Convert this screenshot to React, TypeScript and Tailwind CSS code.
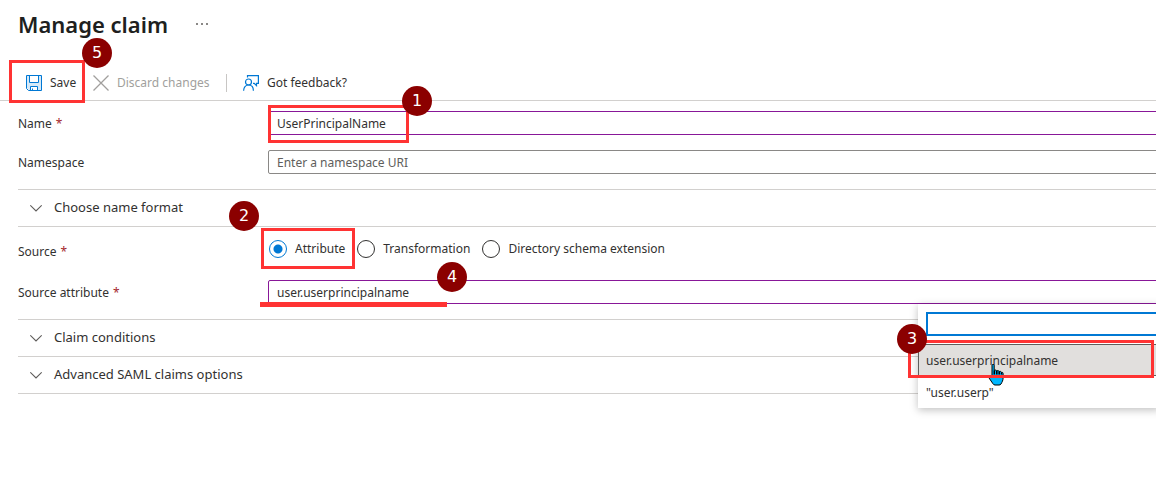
import type { ReactNode } from 'react';

function SaveIcon() {
  return (
    <svg width="16" height="16" viewBox="0 0 16 16" fill="none" stroke="#0078d4" aria-hidden="true">
      <path d="M1 1h14v14H3l-2-2z" fill="#d5e9f8" stroke="none" />
      <path d="M3.500.5h9v7h-9z" fill="#fff" />
      <path d="M4.500 15.500v-4h7v4" fill="#fff" />
      <path d="M.5.5h15v15H2.500l-2-2zM6.500 15.500v-2" />
    </svg>
  );
}

function CloseIcon() {
  return (
    <svg width="16" height="16" viewBox="0 0 16 16" stroke="#a19f9d" strokeWidth="1.3" aria-hidden="true">
      <path d="M.5.5l15 15M15.500.5l-15 15" />
    </svg>
  );
}

function FeedbackIcon() {
  return (
    <svg width="16" height="16" viewBox="0 0 16 16" fill="none" stroke="#0078d4" strokeWidth="1.200" aria-hidden="true">
      <path d="M4.500 2.500V.6h10.900v7.800h-1.900v2.200l-2.300-2.200H10" />
      <circle cx="5.500" cy="7" r="3" />
      <path d="M.6 15.800c0-3.500 2-5.800 4.900-5.800s4.900 2.300 4.900 5.800" />
    </svg>
  );
}

function HandCursor() {
  return (
    <svg width="16" height="22" viewBox="0 0 16 22" aria-hidden="true">
      <path
        d="M4 1.200c0-1 2.200-1 2.200 0v5.300c.6-.8 2.200-.6 2.500.4.700-.7 2.200-.4 2.400.7.800-.6 2.200-.2 2.300.8.900-.4 1.700.2 1.700 1.100V14c0 2.400-1 4-2.100 6-.5.8-1.200 1-2 1H7c-.9 0-1.500-.4-2-1.200L.7 13.500c-.7-1.200.7-2.200 1.700-1.300L4 13.600z"
        fill="#00b7ff"
        stroke="#000"
      />
      <path d="M6.300 6.500v4M8.800 7v3.500M11.200 7.800v2.700M13.500 8.500v2" stroke="#000" strokeWidth="1.500" />
    </svg>
  );
}

function Required() {
  return <span className="ml-1 text-[#a4262c]">*</span>;
}

function Label({ htmlFor, required, children }: { htmlFor?: string; required?: boolean; children: ReactNode }) {
  return (
    <label htmlFor={htmlFor} className="h-6 w-[250px] shrink-0 leading-[26px]">
      {children}
      {required && <Required />}
    </label>
  );
}

function Section({ title }: { title: string }) {
  return (
    <button type="button" className="flex h-[37px] w-full items-center gap-3 border-b border-[#d2d0ce] pl-3 text-left text-[13px]">
      <svg width="12" height="12" viewBox="0 0 12 12" fill="none" stroke="#605e5c" strokeWidth="1.200" aria-hidden="true">
        <path d="M.3 3.300L6 9l5.700-5.700" />
      </svg>
      {title}
    </button>
  );
}

function Radio({ label, checked }: { label: string; checked?: boolean }) {
  return (
    <label className="flex items-center gap-2">
      <input
        type="radio"
        name="source"
        defaultChecked={checked}
        className="size-[18px] appearance-none rounded-full border border-[#323130] bg-white checked:border-[#0078d4] checked:bg-[radial-gradient(circle,#0078d4_4px,#fff_5px)]"
      />
      {label}
    </label>
  );
}

function Badge({ n, place }: { n: number; place: string }) {
  return (
    <span className={`absolute z-30 flex size-[30px] items-center justify-center rounded-full bg-[#8b0000] font-['DejaVu_Sans',sans-serif] text-base text-white ${place}`}>
      {n}
    </span>
  );
}

function Frame({ place }: { place: string }) {
  return <span className={`pointer-events-none absolute z-20 border-3 border-[#ff3333] ${place}`} />;
}

export default function App() {
  return (
    <main className="overflow-hidden bg-white pb-20 pl-[18px] font-['Noto_Sans',sans-serif] text-xs text-[#323130]">
      <header className="flex h-[62px] gap-7 pt-1">
        <h1 className="text-[22px] leading-10 font-semibold text-[#201f1e]">Manage claim</h1>
        <button type="button" aria-label="More" className="flex h-10 items-center gap-[3px]">
          <span className="size-[2px] bg-[#8a8886]" />
          <span className="size-[2px] bg-[#8a8886]" />
          <span className="size-[2px] bg-[#8a8886]" />
        </button>
      </header>

      <div className="relative -ml-[18px] flex h-[39px] items-center border-b border-[#d2d0ce] pb-px pl-[26px] pt-1">
        <button type="button" className="flex w-[67px] items-center gap-2">
          <SaveIcon />
          Save
        </button>
        <button type="button" disabled className="flex w-[133px] items-center gap-2 text-[#a19f9d]">
          <CloseIcon />
          Discard changes
        </button>
        <span className="mr-4 h-[18px] w-px bg-[#c8c6c4]" />
        <button type="button" className="flex items-center gap-2">
          <FeedbackIcon />
          Got feedback?
        </button>
        <Frame place="-top-0.5 left-[9px] h-[43px] w-[76px]" />
        <Badge n={5} place="-top-6 left-[82px]" />
      </div>

      <form>
        <div className="flex flex-col gap-[15px] border-b border-[#d2d0ce] pt-2.5 pb-[15px]">
          <div className="flex">
            <Label htmlFor="name" required>Name</Label>
            <div className="relative -mr-1 grow">
              <input id="name" defaultValue="UserPrincipalName" className="block h-6 w-full rounded-xs border border-[#881798] px-2 outline-none" />
              <Frame place="-top-1.5 left-0 h-[38px] w-[141px]" />
              <Badge n={1} place="-top-[25px] left-[134px]" />
            </div>
          </div>
          <div className="flex">
            <Label htmlFor="namespace">Namespace</Label>
            <input id="namespace" placeholder="Enter a namespace URI" className="-mr-1 block h-6 grow rounded-xs border border-[#8a8886] px-2 outline-none placeholder:text-[#605e5c]" />
          </div>
        </div>

        <Section title="Choose name format" />

        <div className="border-b border-[#d2d0ce] pb-[15px]">
          <div role="radiogroup" aria-labelledby="source-label" className="relative flex h-[53px] items-center pb-2.5">
            <span id="source-label" className="w-[251px] shrink-0 pt-1.5">
              Source
              <Required />
            </span>
            <div className="flex gap-3">
              <Radio label="Attribute" checked />
              <Radio label="Transformation" />
              <Radio label="Directory schema extension" />
            </div>
            <Frame place="top-px left-[243px] h-[41px] w-[94px]" />
            <Badge n={2} place="-top-[26px] left-[211px]" />
          </div>
          <div className="flex">
            <Label htmlFor="attribute" required>Source attribute</Label>
            <div className="relative -mr-1 grow">
              <input id="attribute" defaultValue="user.userprincipalname" className="block h-6 w-full rounded-xs border border-[#881798] px-2 outline-none" />
              <span className="absolute top-[22px] -left-2 z-20 h-[5px] w-[187px] bg-[#ff3333]" />
              <Badge n={4} place="-top-[18px] left-[169px]" />

              <div className="absolute top-full right-0 z-10 w-[242px] bg-white pt-2 shadow-[0_2px_8px_rgba(0,0,0,0.25)]">
                <input aria-label="Filter attributes" className="ml-2 block h-6 w-full border-2 border-[#0078d4] px-2 outline-none" />
                <div className="relative mt-2">
                  <button type="button" className="flex h-8 w-full items-center border border-[#605e5c] bg-[#e1dfdd] pt-0.5 pl-[7px]">user.userprincipalname</button>
                  <button type="button" className="flex h-8 w-full items-center pt-0.5 pl-2">"user.userp"</button>
                  <Frame place="-top-1 -left-2.5 h-[38px] w-[246px]" />
                  <Badge n={3} place="-top-5 -left-[21px]" />
                  <span className="absolute top-5 left-[70px] z-10">
                    <HandCursor />
                  </span>
                </div>
              </div>
            </div>
          </div>
        </div>

        <Section title="Claim conditions" />
        <Section title="Advanced SAML claims options" />
      </form>
    </main>
  );
}
